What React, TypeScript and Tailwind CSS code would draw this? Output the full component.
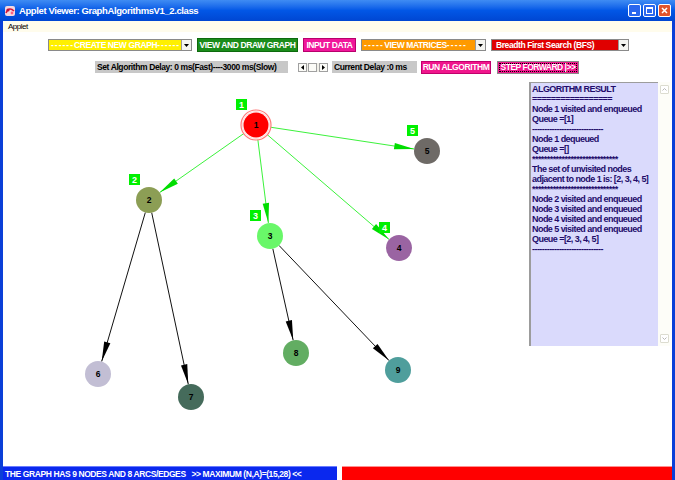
import React from 'react';

type Node = { id: number; x: number; y: number; fill: string; label?: boolean };

const nodes: Node[] = [
  { id: 1, x: 256, y: 125, fill: '#ff0000', label: true },
  { id: 2, x: 149, y: 200, fill: '#8c9e55', label: true },
  { id: 3, x: 270, y: 236, fill: '#69f769', label: true },
  { id: 4, x: 399, y: 248, fill: '#9a64a2', label: true },
  { id: 5, x: 427, y: 151, fill: '#6e6a66', label: true },
  { id: 6, x: 98, y: 374, fill: '#c2bed4' },
  { id: 7, x: 191, y: 397, fill: '#456b5b' },
  { id: 8, x: 296, y: 353, fill: '#62ad62' },
  { id: 9, x: 398, y: 370, fill: '#4f9e9c' },
];

const edges: [number, number, boolean][] = [
  [1, 2, true],
  [1, 3, true],
  [1, 4, true],
  [1, 5, true],
  [2, 6, false],
  [2, 7, false],
  [3, 8, false],
  [3, 9, false],
];

const R = 13;

const find = (id: number) => nodes.find((n) => n.id === id)!;

function Edge({ from, to, visited }: { from: number; to: number; visited: boolean }) {
  const a = find(from);
  const b = find(to);
  const dx = b.x - a.x;
  const dy = b.y - a.y;
  const d = Math.hypot(dx, dy);
  const ux = dx / d;
  const uy = dy / d;
  const sx = a.x + ux * R;
  const sy = a.y + uy * R;
  const ex = b.x - ux * R;
  const ey = b.y - uy * R;
  const L = 20;
  const W = 3.2;
  const bx = ex - ux * L;
  const by = ey - uy * L;
  const head = `${ex},${ey} ${bx - uy * W},${by + ux * W} ${bx + uy * W},${by - ux * W}`;
  return (
    <g>
      <line x1={sx} y1={sy} x2={ex} y2={ey} stroke={visited ? '#3cf23c' : '#111'} strokeWidth={1} />
      <polygon points={head} fill={visited ? '#00dd00' : '#000'} />
    </g>
  );
}

function Graph() {
  return (
    <svg className="absolute left-0 top-0" width={527} height={393} viewBox="3 73 527 393">
      {edges.map(([f, t, v]) => (
        <Edge key={`${f}-${t}`} from={f} to={t} visited={v} />
      ))}
      {nodes.map((n) => (
        <g key={n.id}>
          {n.id === 1 && (
            <>
              <circle cx={n.x} cy={n.y} r={15} fill="#fff" stroke="#ff7a7a" strokeWidth={1.2} />
              <circle cx={n.x} cy={n.y} r={13.6} fill="none" stroke="#ffd0d0" strokeWidth={0.8} />
            </>
          )}
          <circle cx={n.x} cy={n.y} r={n.id === 1 ? 12.5 : 13} fill={n.fill} />
          <text
            x={n.x}
            y={n.y + 3}
            textAnchor="middle"
            fontFamily="Liberation Sans, Arial, sans-serif"
            fontWeight="bold"
            fontSize={8.5}
            fill="#000"
          >
            {n.id}
          </text>
        </g>
      ))}
      {nodes
        .filter((n) => n.label)
        .map((n) => (
          <g key={`l${n.id}`}>
            <rect x={n.x - 20} y={n.y - 26} width={11} height={11} fill="#00f000" />
            <text
              x={n.x - 14.5}
              y={n.y - 17}
              textAnchor="middle"
              fontFamily="Liberation Sans, Arial, sans-serif"
              fontWeight="bold"
              fontSize={9}
              fill="#fff"
            >
              {n.id}
            </text>
          </g>
        ))}
    </svg>
  );
}

function DropArrow() {
  return (
    <div className="flex h-full w-[10px] items-center justify-center border-l border-[#9a9a9a] bg-[#f4f4f0]">
      <svg width="5" height="3" viewBox="0 0 5 3">
        <polygon points="0,0 5,0 2.5,3" fill="#000" />
      </svg>
    </div>
  );
}

function Select({ className, children }: { className: string; children: React.ReactNode }) {
  return (
    <div className={`flex h-[12px] items-stretch border border-[#8a8a8a] ${className}`}>
      <div className="flex flex-1 items-center overflow-hidden whitespace-pre pl-[2px] text-white">{children}</div>
      <DropArrow />
    </div>
  );
}

const resultLines = [
  'ALGORITHM RESULT',
  '=================',
  'Node 1 visited and enqueued',
  'Queue =[1]',
  '-----------------------------',
  'Node 1 dequeued',
  'Queue =[]',
  '*****************************',
  'The set of unvisited nodes',
  'adjacent to node 1 is: [2, 3, 4, 5]',
  '*****************************',
  'Node 2 visited and enqueued',
  'Node 3 visited and enqueued',
  'Node 4 visited and enqueued',
  'Node 5 visited and enqueued',
  'Queue =[2, 3, 4, 5]',
  '-----------------------------',
];

export default function App() {
  return (
    <div className="relative h-[480px] w-[675px] overflow-hidden bg-white font-['Liberation_Sans',Arial,sans-serif]">
      {/* title bar */}
      <div className="flex h-[21px] items-center bg-gradient-to-b from-[#3f8cf3] via-[#0257e6] to-[#0046d2] pl-[4px] pr-[4px]">
        <svg width="12" height="12" viewBox="0 0 12 12">
          <rect x="1" y="1" width="10" height="10" rx="2" fill="#f4d7e0" />
          <path d="M2 8 C4 3 7 3 10 6" stroke="#d8183c" strokeWidth="1.6" fill="none" />
          <circle cx="4" cy="5" r="1.6" fill="#c0103a" />
          <circle cx="8" cy="8" r="1.4" fill="#ff6080" />
        </svg>
        <span className="ml-[3px] text-[9.5px] font-bold leading-none tracking-[-0.4px] text-white">
          Applet Viewer: GraphAlgorithmsV1_2.class
        </span>
        <div className="ml-auto flex gap-[2px]">
          <div className="flex h-[13px] w-[13px] items-end justify-start rounded-[2px] border border-white bg-[#2a67ee] pb-[2px] pl-[3px]">
            <div className="h-[2px] w-[4px] bg-white" />
          </div>
          <div className="flex h-[13px] w-[13px] items-center justify-center rounded-[2px] border border-white bg-[#2a67ee]">
            <div className="h-[7px] w-[7px] border border-t-2 border-white" />
          </div>
          <div className="flex h-[13px] w-[13px] items-center justify-center rounded-[2px] border border-white bg-[#e0542c]">
            <svg width="7" height="7" viewBox="0 0 7 7">
              <path d="M1 1 L6 6 M6 1 L1 6" stroke="#fff" strokeWidth="1.5" />
            </svg>
          </div>
        </div>
      </div>

      <div className="flex h-[459px] border-x-[3px] border-[#0a3fd8]">
        <div className="flex flex-1 flex-col">
          {/* menu */}
          <div className="flex h-[11px] items-center bg-[#fffcec] pl-[5px] text-[8px] leading-none tracking-[-0.5px] text-black">
            Applet
          </div>

          {/* row 1 */}
          <div className="mt-[6px] flex h-[14px] items-center whitespace-nowrap pl-[45px] text-[8.5px] font-bold leading-none tracking-[-0.4px]">
            <Select className="w-[144px] bg-[#fff000]">
              <span className="tracking-[1px]">------</span>CREATE NEW GRAPH<span className="tracking-[1px]">------</span>
            </Select>
            <div className="ml-[5px] flex h-[14px] w-[101px] items-center justify-center border border-[#0d6a0d] bg-[#1a8c1a] text-white">
              VIEW AND DRAW GRAPH
            </div>
            <div className="ml-[5px] flex h-[14px] w-[53px] items-center justify-center border border-[#b8006c] bg-[#f0169a] text-white">
              INPUT DATA
            </div>
            <Select className="ml-[5px] w-[125px] bg-[#ff9a00]">
              <span className="tracking-[1.2px]">-----</span>VIEW MATRICES<span className="tracking-[1.2px]">-----</span>
            </Select>
            <Select className="ml-[5px] w-[138px] bg-[#e00000]"> Breadth First Search (BFS)</Select>
          </div>

          {/* row 2 */}
          <div className="mt-[9px] flex h-[12px] items-center whitespace-nowrap pl-[92px] text-[8.5px] font-bold leading-none tracking-[-0.4px]">
            <div className="flex h-[12px] w-[193px] items-center bg-[#c8c8c8] pl-[2px] text-black">
              Set Algorithm Delay: 0 ms(Fast)----3000 ms(Slow)
            </div>
            <div className="ml-[10px] flex h-[9px] w-[30px] items-stretch bg-[#f0efe8]">
              <div className="flex w-[9px] items-center justify-center border border-[#a0a0a0] bg-[#fbfbf7]">
                <svg width="3" height="5" viewBox="0 0 3 5">
                  <polygon points="3,0 3,5 0,2.5" fill="#000" />
                </svg>
              </div>
              <div className="ml-[1px] w-[9px] border border-[#a0a0a0] bg-[#fbfbf7]" />
              <div className="flex-1" />
              <div className="flex w-[9px] items-center justify-center border border-[#a0a0a0] bg-[#fbfbf7]">
                <svg width="3" height="5" viewBox="0 0 3 5">
                  <polygon points="0,0 0,5 3,2.5" fill="#000" />
                </svg>
              </div>
            </div>
            <div className="ml-[4px] flex h-[12px] w-[85px] items-center bg-[#c8c8c8] pl-[2px] text-black">
              Current Delay :0 ms
            </div>
            <div className="ml-[4px] flex h-[13px] w-[70px] items-center justify-center border border-[#c0006c] bg-[#f0168c] text-white">
              RUN ALGORITHM
            </div>
            <div className="ml-[6px] flex h-[13px] w-[82px] items-center justify-center border border-[#8a8a8a] bg-[#f0168c] p-[1px] text-white">
              <div className="flex h-full w-full items-center justify-center border border-dotted border-black tracking-[-0.5px]">
                STEP FORWARD |&gt;&gt;
              </div>
            </div>
          </div>

          {/* main */}
          <div className="relative flex h-[393px] justify-end pr-[2px] pt-[9px]">
            <Graph />
            <div className="relative flex h-[264px] w-[141px]">
              <div className="flex-1 overflow-hidden border-l-2 border-t border-[#9c9c9c] bg-[#dadafc] pl-[1px] pt-[1px] text-[9px] font-bold leading-[10px] tracking-[-0.55px] text-[#220c6a]">
                {resultLines.map((l, i) => (
                  <div key={i} className="whitespace-pre">
                    {l}
                  </div>
                ))}
              </div>
              <div className="flex w-[12px] flex-col justify-between bg-[#fdfdf8] py-[3px]">
                <div className="mx-auto flex h-[9px] w-[9px] items-center justify-center rounded-[1px] border border-[#dcdcd0] bg-white">
                  <svg width="5" height="3" viewBox="0 0 5 3">
                    <path d="M0.5 2.5 L2.5 0.5 L4.5 2.5" stroke="#b8b8b8" fill="none" />
                  </svg>
                </div>
                <div className="mx-auto flex h-[9px] w-[9px] items-center justify-center rounded-[1px] border border-[#dcdcd0] bg-white">
                  <svg width="5" height="3" viewBox="0 0 5 3">
                    <path d="M0.5 0.5 L2.5 2.5 L4.5 0.5" stroke="#b8b8b8" fill="none" />
                  </svg>
                </div>
              </div>
            </div>
          </div>

          {/* status */}
          <div className="flex h-[14px] items-stretch text-[8.5px] font-bold leading-none tracking-[-0.4px]">
            <div className="flex w-[334px] items-center whitespace-pre border-t border-[#6a7cff] bg-[#0a28ee] pl-[2px] pt-[2px] text-white">
              THE GRAPH HAS 9 NODES AND 8 ARCS/EDGES   &gt;&gt; MAXIMUM (N,A)=(15,28) &lt;&lt;
            </div>
            <div className="ml-[5px] flex-1 border-t border-[#ff9090] bg-[#ff0000]" />
          </div>
        </div>
      </div>
    </div>
  );
}
